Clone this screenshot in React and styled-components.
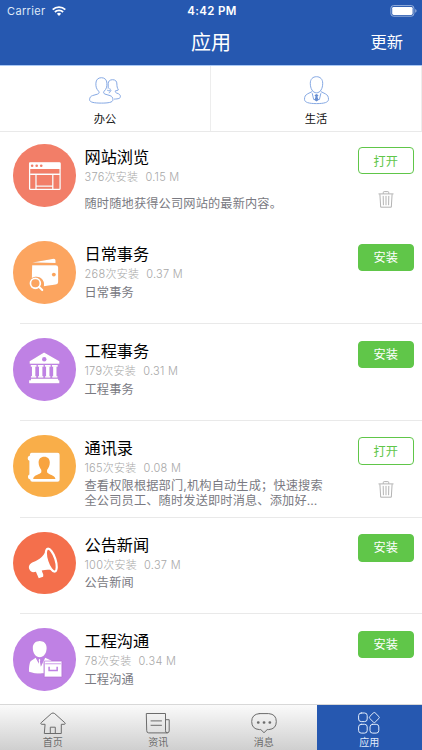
import { styled, createGlobalStyle } from "styled-components";

const GlobalStyle = createGlobalStyle`
  * {
    box-sizing: border-box;
  }
  body {
    margin: 0;
    background-color: #fff;
    font-family: Inter, "Noto Sans CJK SC", sans-serif;
  }
  svg {
    display: block;
    overflow: visible;
  }
`;

const Screen = styled.div`
  width: 422px;
  height: 750px;
  display: flex;
  flex-direction: column;
  overflow: hidden;
`;

const Header = styled.header`
  flex: none;
  height: 66px;
  background-color: #2658b0;
  border-bottom: 1px solid #a9c8f5;
  color: #fff;
`;

const StatusBar = styled.div`
  height: 21px;
  padding: 1px 5px 0 7px;
  display: grid;
  grid-template-columns: 1fr auto 1fr;
  align-items: center;
  font-size: 11px;
`;

const Carrier = styled.div`
  display: flex;
  align-items: center;
  gap: 6px;
  color: #dfe8f7;
  letter-spacing: 0.35px;
`;

const Clock = styled.span`
  font-size: 11.5px;
  font-weight: 600;
  letter-spacing: 0.35px;
`;

const Battery = styled.div`
  justify-self: end;
`;

const TitleBar = styled.div`
  height: 43px;
  display: grid;
  grid-template-columns: 1fr auto 1fr;
  align-items: center;
  padding: 0 19px;
`;

const PageTitle = styled.h1`
  grid-column: 2;
  margin: 0;
  font-size: 20px;
  line-height: 30px;
  font-weight: 400;
`;

const UpdateButton = styled.button`
  justify-self: end;
  padding: 0 0 3px;
  border: 0;
  background: none;
  color: #fff;
  font: inherit;
  font-size: 16.3px;
`;

const Categories = styled.div`
  flex: none;
  height: 66px;
  display: grid;
  grid-template-columns: 1fr 1fr;
  border-bottom: 1px solid #e9e9e9;
`;

const Category = styled.div`
  display: flex;
  flex-direction: column;
  align-items: center;
  padding-top: 10px;
  border-right: 1px solid #ededed;
  font-size: 11.3px;
  line-height: 16px;
  color: #111;

  svg {
    margin-bottom: 7px;
  }
`;

const AppList = styled.div`
  flex: 1;
  min-height: 0;
  overflow: hidden;
`;

const AppRow = styled.div`
  height: ${(props) => (props.$first ? "95.3px" : "96.8px")};
  display: flex;
  padding-left: 13px;
  padding-right: 8.5px;
  padding-top: ${(props) => (props.$first ? "12px" : "14px")};
`;

const Divider = styled.div`
  height: 1px;
  margin: -1px 0 0 20px;
  background-color: #e9e9e9;
`;

const AppIcon = styled.div`
  flex: none;
  width: 62.5px;
  height: 62.5px;
  border-radius: 50%;
  background-color: ${(props) => props.$color};

  svg {
    filter: drop-shadow(0.8px 0.8px 0.5px rgba(90, 30, 20, 0.2));
  }
`;

const AppInfo = styled.div`
  flex: 1;
  padding-left: 9px;
  padding-top: 1px;
`;

const AppName = styled.div`
  font-size: 16.2px;
  line-height: 24px;
  color: #000;
`;

const AppMeta = styled.div`
  display: flex;
  gap: 7px;
  margin-top: 1px;
  font-size: 11px;
  line-height: 14px;
  font-weight: 300;
  letter-spacing: 0.27px;
  color: #a8a8a8;
`;

const AppText = styled.div`
  width: 246px;
  height: 30px;
  display: flex;
  flex-direction: column;
  justify-content: ${(props) => (props.$centered ? "center" : "flex-start")};
  margin-top: ${(props) => (props.$centered ? "4px" : "3.5px")};
  font-size: 12.2px;
  line-height: 15px;
  letter-spacing: 0.16px;
  color: #7a7a82;
  white-space: nowrap;
`;

const Actions = styled.div`
  display: flex;
  flex-direction: column;
  align-items: center;
  padding-top: 2.5px;
  gap: 16.5px;
`;

const ActionButton = styled.button`
  width: 55.5px;
  height: 27.5px;
  padding: ${(props) => (props.$installed ? "2px 0 0" : "0.5px 0 0")};
  border: 1px solid #60c649;
  border-radius: 4px;
  background-color: ${(props) => (props.$installed ? "#fff" : "#60c649")};
  color: ${(props) => (props.$installed ? "#60c649" : "#fff")};
  font: inherit;
  font-size: 12.2px;
  line-height: 24px;
`;

const TabBar = styled.nav`
  flex: none;
  height: 46px;
  display: grid;
  grid-template-columns: repeat(4, 1fr);
  border-top: 1px solid #d8d8d8;
  background: linear-gradient(#fafafa, #cfcfcf);
`;

const Tab = styled.div`
  display: flex;
  flex-direction: column;
  align-items: center;
  padding-top: 7px;
  font-size: 10px;
  line-height: 14px;
  color: ${(props) => (props.$active ? "#e2ecfb" : "#6c6c6c")};
  background-color: ${(props) => (props.$active ? "#2658b0" : "transparent")};

  svg {
    margin-bottom: 1px;
    fill: none;
    stroke: currentColor;
    stroke-linejoin: round;
    stroke-linecap: round;
  }
`;

const WifiIcon = () => (
  <svg width="14" height="10" viewBox="0 0 14 10" fill="none" stroke="#fff" strokeWidth="1.8">
    <path d="M.7 3.6a9 9 0 0 1 12.6 0M2.9 6a5.8 5.8 0 0 1 8.2 0" />
    <path d="M7 10 4.9 7.8a3 3 0 0 1 4.2 0z" fill="#fff" stroke="none" />
  </svg>
);

const BatteryIcon = () => (
  <svg width="27" height="12" viewBox="0 0 27 12">
    <rect x=".9" y=".6" width="23" height="10.6" rx="2.6" fill="none" stroke="#a5bbe0" strokeWidth=".9" />
    <rect x="2.2" y="1.9" width="20.4" height="8" rx="1.4" fill="#fff" />
    <path d="M25.3 4.1c1.6.5 1.6 3.1 0 3.6z" fill="#a5bbe0" />
  </svg>
);

const PeopleIcon = () => (
  <svg width="32" height="28" viewBox="0 0 32 28" fill="none" stroke="#86a9e4" strokeWidth="1">
    <path d="M9.7 15.3C7.5 13 6.7 11 6.9 7.2 7 3.8 9 1.7 12.4 1.7s5.4 2.1 5.5 5.5c.2 3.8-.6 5.8-2.8 8.1-.9 1-.5 2.3.9 2.8l5 1.5c2 .7 2.9 1.9 2.9 4.2 0 2.6-4.7 3.3-11.5 3.3S.6 26.4.6 23.8c0-2.3.9-3.5 2.9-4.2l5.1-1.5c1.5-.5 2-1.8 1.1-2.8z" />
    <path d="M19.2 12.6V7.7c0-2.5 1.6-4 4.4-4s4.300 1.500 4.300 4.300c0 2.300.3 3.900 1.500 5.900-.9.600-1.900.9-3 .9-.3 1.300.2 1.900 1.400 2.300 2.500.8 3.600 1.700 3.600 3.600 0 1.700-2 2.200-6.300 2.400" />
    <path d="M18.2 14.2c1 .5 2 .7 3.1.6.2 1.1-.3 1.7-1.5 2.1M20.7 12.3c.3 1 .8 1.800 1.500 2.500" />
  </svg>
);

const PersonIcon = () => (
  <svg width="25" height="28" viewBox="0 0 25 28" fill="none" stroke="#86a9e4" strokeWidth="1">
    <path d="M12.5.7c3.700 0 6.200 2.400 6.200 6.600 0 5.300-2.400 9.500-6.200 9.500S6.300 12.600 6.300 7.300c0-4.200 2.500-6.600 6.200-6.600z" />
    <path d="M8.3 15.500 3.700 17.800C1.300 19 .5 20.700.5 23.300c0 3.100 4.300 4.300 12 4.300s12-1.200 12-4.300c0-2.600-.8-4.300-3.200-5.500l-4.600-2.300M8.200 17.200l1.500 6.300h5.700l1.500-6.300" />
    <path d="m12.500 18 2 1.300-1.100 1.500 1.200 3.300-2.100 1.400-2.100-1.400 1.200-3.300-1.100-1.500z" fill="#668dd1" stroke="none" />
  </svg>
);

const TrashIcon = () => (
  <svg width="16" height="17" viewBox="0 0 16 17" fill="none" stroke="#aaa" strokeWidth=".9">
    <path d="M.5 2.900h15M5.300 2.700V1.500Q5.300.6 6.200.6h3.600q.9 0 .9.9v1.200M1.900 3.200l.8 13h10.600l.8-13M5.200 4.900l.2 9.300M8 4.900v9.300M10.800 4.900l-.2 9.300" />
  </svg>
);

const WebGlyph = () => (
  <svg viewBox="0 0 62 62" fill="none" stroke="#fff" strokeWidth="1.3">
    <rect x="16.5" y="18.8" width="30.2" height="26.3" rx=".8" />
    <path d="M16 18.500h31v6.300H16z" fill="#fff" stroke="none" />
    <path d="M17 30h29.700M22.800 30v15M39.500 30v15M22.800 41.800h16.700" />
    <g fill="#f27e68" stroke="none">
      <circle cx="19" cy="21.6" r="1.3" />
      <circle cx="23.5" cy="21.6" r="1.3" />
      <circle cx="28" cy="21.6" r="1.3" />
    </g>
  </svg>
);

const WalletGlyph = () => (
  <svg viewBox="0 0 62 62" fill="#fff">
    <path d="m19.200 21.400 21-3.800q2-.3 2 1.700v2.500z" />
    <path d="M19 24h23.500q2.300 0 2.300 2.300v14.300q0 2.200-2.200 2.600l-12 1.800c1.500-5.500-3.500-10.800-9.500-9.200-1 .2-1.600.6-2.400 1z" />
    <circle cx="40.5" cy="33.3" r="1.9" fill="#fba45c" />
    <g fill="none" stroke="#fff" strokeLinecap="round">
      <circle cx="22.2" cy="42" r="4.9" strokeWidth="1.8" />
      <path d="m26 45.600 3 3" strokeWidth="2.2" />
    </g>
  </svg>
);

const BankGlyph = () => (
  <svg viewBox="0 0 62 62" fill="#fff">
    <path d="M30.8 14.500 46 23v2.500H16.500V23z" />
    <circle cx="31" cy="21" r="2.2" fill="#bf81e4" />
    {[20.5, 27.5, 34.5, 41.500].map((x) => (
      <g key={x}>
        <rect x={x - 2.9} y="26.8" width="5.8" height="1.7" />
        <rect x={x - 1.7} y="28" width="3.4" height="10" />
        <rect x={x - 2.6} y="37.8" width="5.2" height="1.5" />
      </g>
    ))}
    <path d="M17.800 40.500h27v1.400H46V45H16v-3.100h1.800z" />
  </svg>
);

const ContactsGlyph = () => (
  <svg viewBox="0 0 62 62">
    <path
      d="M18.500 17.700h25.800q2 0 2 2v24.600q0 2-2 2H19.100q-2 0-2.100-2.200-2.200-.2-2.200-2.400t1.400-2.500V25.600q-1.700-.4-1.700-2.500 0-2 2.100-2.400.1-3 1.900-3z"
      fill="#fff"
    />
    <path
      d="M31 21.500c3.500 0 5.600 2.300 5.500 5.900-.1 3-1 5.500-2.700 7.200v2.300c1.200 2.600 7.800 2.300 8.300 6.800H20c.4-4.600 6.900-4.200 8.100-6.800v-2.300c-1.600-1.700-2.600-4.200-2.700-7.200-.1-3.600 2-5.900 5.600-5.900z"
      fill="#f8a440"
    />
  </svg>
);

const HornGlyph = () => (
  <svg viewBox="0 0 62 62">
    <path
      d="M33.500 16.700c-2.500 6.700-6.600 10.700-13.300 13.100-3.500 1.300-5.100 3.900-4.200 6.700 1 3 3.200 3.900 6.700 3l2.800 6.500 4.400-1.600.2-1.900-1.600-4.200c5.500-1.400 9.600-.9 14.400.9z"
      fill="#fff"
    />
    <ellipse cx="38" cy="27.9" rx="4.2" ry="11.8" transform="rotate(-18 38 27.9)" fill="#f46f4c" stroke="#fff" strokeWidth="2.2" />
  </svg>
);

const ManagerGlyph = () => (
  <svg viewBox="0 0 62 62" fill="#fff">
    <path d="M26.500 13c4.300 0 7 2.800 6.900 7-.1 4.700-2.800 9-6.900 9s-6.800-4.300-6.900-9c-.1-4.200 2.600-7 6.900-7z" />
    <path d="M22.500 29.600 18 32.500c-1.700 1.200-2.200 5.900-2.100 10.800 4.400 1.600 9.300 2 14.600 1.700V33.500h8.300c-.8-1.500-3.700-2.600-6.900-3.900l-4.400 9.100z" />
    <path d="m26.200 30.500 1 1.200-.5 1.200.9 5.500-1.700 1.900-1-2.200 1-5.200-.6-1.200z" />
    <path d="M31 32.800h17.500v15.800H31z" stroke="#bf81e4" strokeWidth=".8" />
    <path d="M32 35.500h15.500" stroke="#c891e7" strokeWidth=".9" />
    <path d="M35.800 38.500v3.600h8v-3.600" fill="none" stroke="#bf81e4" strokeWidth="1.5" />
  </svg>
);

const HomeIcon = () => (
  <svg width="26" height="22" viewBox="0 0 26 22">
    <path d="M4.700 12.300H1.600q-1.500-.2-.4-1.600L11.300 1.600q1.700-1.300 3.400 0l10.100 9.100q1.100 1.400-.4 1.600h-3.100v9.200H4.700zM10.300 21.500v-6.300h5v6.300" />
  </svg>
);

const NewsIcon = () => (
  <svg width="24" height="22" viewBox="0 0 24 22">
    <path d="M.7 1.500h18.800v17.200q0 2.200 1.800 2.200H2.700q-2 0-2-2zM19.500 7.700h3.700v11.200q0 2-1.900 2M5 8.900h10.500M5 13.300h10.500" />
  </svg>
);

const ChatIcon = () => (
  <svg width="26" height="22" viewBox="0 0 26 22">
    <path d="M8.300 1.600h9.400q7.600.6 7.600 8t-7.600 8h-1.500L13 20.700l-3.200-3.100H8.300q-7.600-.6-7.600-8t7.600-8z" />
    <path d="M7.200 10.500h.1M13 10.500h.1M18.800 10.500h.1" strokeWidth="2.7" />
  </svg>
);

const AppsIcon = () => (
  <svg width="22" height="22" viewBox="0 0 22 22">
    <rect x=".6" y="1" width="8.6" height="8.6" rx="2.6" />
    <path d="M15.500.8q.8-.7 1.600 0l3.900 3.900q.7.800 0 1.600l-3.900 3.900q-.8.700-1.600 0l-3.900-3.900q-.7-.8 0-1.600z" />
    <rect x=".6" y="12.3" width="8.6" height="8.8" rx="2.6" />
    <rect x="12" y="12.3" width="8.8" height="8.8" rx="2.6" />
  </svg>
);

const apps = [
  {
    name: "网站浏览",
    installs: 376,
    size: "0.15 M",
    text: ["随时随地获得公司网站的最新内容。"],
    installed: true,
    color: "#f27e68",
    Glyph: WebGlyph,
  },
  { name: "日常事务", installs: 268, size: "0.37 M", text: ["日常事务"], color: "#fca560", Glyph: WalletGlyph },
  { name: "工程事务", installs: 179, size: "0.31 M", text: ["工程事务"], color: "#bf81e4", Glyph: BankGlyph },
  {
    name: "通讯录",
    installs: 165,
    size: "0.08 M",
    text: ["查看权限根据部门,机构自动生成；快速搜索", "全公司员工、随时发送即时消息、添加好…"],
    installed: true,
    color: "#f9ae49",
    Glyph: ContactsGlyph,
  },
  { name: "公告新闻", installs: 100, size: "0.37 M", text: ["公告新闻"], color: "#f46f4c", Glyph: HornGlyph },
  { name: "工程沟通", installs: 78, size: "0.34 M", text: ["工程沟通"], color: "#bf81e4", Glyph: ManagerGlyph },
];

const tabs = [
  { label: "首页", Icon: HomeIcon },
  { label: "资讯", Icon: NewsIcon },
  { label: "消息", Icon: ChatIcon },
  { label: "应用", Icon: AppsIcon, active: true },
];

export default function App() {
  return (
    <Screen>
      <GlobalStyle />
      <Header>
        <StatusBar>
          <Carrier>
            Carrier
            <WifiIcon />
          </Carrier>
          <Clock>4:42 PM</Clock>
          <Battery>
            <BatteryIcon />
          </Battery>
        </StatusBar>
        <TitleBar>
          <PageTitle>应用</PageTitle>
          <UpdateButton>更新</UpdateButton>
        </TitleBar>
      </Header>

      <Categories>
        <Category>
          <PeopleIcon />
          办公
        </Category>
        <Category>
          <PersonIcon />
          生活
        </Category>
      </Categories>

      <AppList>
        {apps.map(({ name, installs, size, text, installed, color, Glyph }, index) => (
          <div key={name}>
            {index > 1 && <Divider />}
            <AppRow $first={index === 0}>
              <AppIcon $color={color}>
                <Glyph />
              </AppIcon>
              <AppInfo>
                <AppName>{name}</AppName>
                <AppMeta>
                  <span>{installs}次安装</span>
                  <span>{size}</span>
                </AppMeta>
                <AppText $centered={installed && text.length === 1}>
                  {text.map((line) => (
                    <span key={line}>{line}</span>
                  ))}
                </AppText>
              </AppInfo>
              <Actions>
                <ActionButton $installed={installed}>{installed ? "打开" : "安装"}</ActionButton>
                {installed && <TrashIcon />}
              </Actions>
            </AppRow>
          </div>
        ))}
      </AppList>

      <TabBar>
        {tabs.map(({ label, Icon, active }) => (
          <Tab key={label} $active={active}>
            <Icon />
            {label}
          </Tab>
        ))}
      </TabBar>
    </Screen>
  );
}
